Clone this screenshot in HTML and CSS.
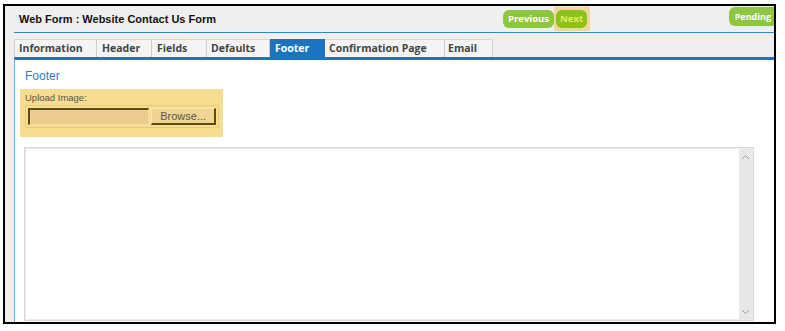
FILE: index.html
```html
<!DOCTYPE html>
<html>
<head>
<meta charset="utf-8">
<link rel="stylesheet" href="styles.css">
</head>
<body>
<div class="frame">
  <div class="main">
    <div class="header">
      <div class="title">Web Form : Website Contact Us Form</div>
      <div class="nav">
        <span class="btn">Previous</span>
        <span class="next-wrap"><span class="btn next">Next</span></span>
      </div>
      <span class="badge">Pending</span>
    </div>
    <div class="tabs">
      <span class="tab tab-info">Information</span>
      <span class="tab tab-header">Header</span>
      <span class="tab tab-fields">Fields</span>
      <span class="tab tab-defaults">Defaults</span>
      <span class="tab tab-footer active">Footer</span>
      <span class="tab tab-confirm">Confirmation Page</span>
      <span class="tab tab-email">Email</span>
    </div>
    <div class="panel">
      <div class="heading">Footer</div>
      <div class="upload">
        <div class="label">Upload Image:</div>
        <div class="filebox">
          <span class="fileinput"></span>
          <span class="browse">Browse...</span>
        </div>
      </div>
      <div class="editor">
        <div class="editor-body"></div>
        <div class="scrollbar">
          <svg width="9" height="6" viewBox="0 0 9 6"><polyline points="1,5 4.5,1.5 8,5" fill="none" stroke="#a0a0a0" stroke-width="1"/></svg>
          <svg width="9" height="6" viewBox="0 0 9 6"><polyline points="1,1 4.5,4.5 8,1" fill="none" stroke="#a0a0a0" stroke-width="1"/></svg>
        </div>
      </div>
    </div>
  </div>
</div>
</body>
</html>
```

FILE: styles.css
```css
html, body {
  margin: 0;
  padding: 0;
  background: #ffffff;
}
body {
  font-family: "Liberation Sans", Arial, sans-serif;
}
.frame {
  box-sizing: border-box;
  margin: 4px 0 0 3px;
  width: 773px;
  height: 320px;
  border: 2px solid #000;
  background: #efefef;
  display: flex;
  overflow: hidden;
}
.main {
  margin-left: 9px;
  flex: 1;
  display: flex;
  flex-direction: column;
  min-width: 0;
}
.header {
  height: 26px;
  border-bottom: 1px solid #2b86d0;
  display: flex;
  align-items: center;
}
.title {
  flex: 0 0 484px;
  padding-left: 5px;
  font-weight: bold;
  font-size: 11px;
  color: #111;
}
.nav {
  display: flex;
  align-items: center;
}
.btn {
  display: inline-block;
  height: 18px;
  line-height: 18px;
  padding: 0 5px;
  border-radius: 6px;
  background: #8dc63f;
  color: #fff;
  font-family: "Open Sans", sans-serif;
  font-weight: 700;
  font-size: 9.5px;
}
.next-wrap {
  display: inline-flex;
  align-items: center;
  height: 24px;
  padding: 0 3px 0 2px;
  background: #f3d69b;
}
.btn.next {
  background: #8cc21c;
  color: #e6ec5e;
  padding: 0 4px;
}
.badge {
  margin-left: auto;
  align-self: flex-start;
  margin-top: 1px;
  height: 19px;
  line-height: 19px;
  padding: 0 3px 0 6px;
  border-radius: 6px 0 0 6px;
  background: #8dc63f;
  color: #fff;
  font-family: "Open Sans", sans-serif;
  font-weight: 700;
  font-size: 9px;
}
.tabs {
  margin-top: 6px;
  display: flex;
  height: 18px;
}
.tab {
  box-sizing: border-box;
  height: 18px;
  line-height: 17px;
  padding: 0 0 0 4px;
  background: #f4f4f4;
  border-top: 1px solid #d6d6d6;
  border-right: 1px solid #d0d0d0;
  font-family: "Open Sans", sans-serif;
  font-weight: 700;
  font-size: 10.5px;
  color: #444;
  white-space: nowrap;
}
.tab-info {
  width: 83px;
  border-left: 1px solid #d0d0d0;
}
.tab-header { width: 55px; padding-left: 5px; }
.tab-fields { width: 55px; padding-left: 5px; }
.tab-defaults { width: 63px; padding-left: 4px; }
.tab-footer { width: 55px; padding-left: 5px; }
.tab-confirm { width: 120px; padding-left: 4px; }
.tab-email { width: 48px; padding-left: 3px; }
.tab.active {
  background: #1a74bf;
  border-top-color: #1a74bf;
  border-right-color: #1a74bf;
  color: #fff;
}
.panel {
  flex: 1;
  border-top: 3px solid #1a74bf;
  border-left: 1px solid #6aaee6;
  background: #fff;
  padding: 8px 0 0 0;
  display: flex;
  flex-direction: column;
}
.heading {
  margin-left: 10px;
  font-size: 12px;
  line-height: 16px;
  color: #2a7fc8;
}
.upload {
  align-self: flex-start;
  margin: 5px 0 0 5px;
  width: 203px;
  box-sizing: border-box;
  padding: 3px 4px 9px 5px;
  background: #f7dd8f;
}
.label {
  font-size: 9.5px;
  line-height: 12px;
  color: #555;
}
.filebox {
  margin-top: 1px;
  width: 194px;
  box-sizing: border-box;
  border: 1px solid #e6cb7f;
  padding: 2px;
  display: flex;
  gap: 2px;
}
.fileinput {
  box-sizing: border-box;
  width: 122px;
  height: 17px;
  background: #edcd8f;
  border-top: 2px solid #5c4916;
  border-left: 2px solid #5c4916;
  border-right: 1px solid #f3dca2;
  border-bottom: 1px solid #f3dca2;
}
.browse {
  box-sizing: border-box;
  width: 65px;
  height: 17px;
  line-height: 15px;
  text-align: center;
  background: #f0d592;
  border-top: 1px solid #f8e6b4;
  border-left: 1px solid #f8e6b4;
  border-right: 2px solid #5c4916;
  border-bottom: 2px solid #5c4916;
  font-size: 11px;
  color: #555;
}
.editor {
  margin: 10px 0 1px 9px;
  width: 730px;
  flex: 1;
  box-sizing: border-box;
  border: 1px solid #d8d8d8;
  box-shadow: inset 0 0 0 1px #ececec;
  display: flex;
}
.editor-body {
  flex: 1;
}
.scrollbar {
  width: 13px;
  margin: 1px 1px 1px 0;
  background: #e8e8e8;
  display: flex;
  flex-direction: column;
  justify-content: space-between;
  align-items: center;
  padding: 5px 0 4px;
}
```
